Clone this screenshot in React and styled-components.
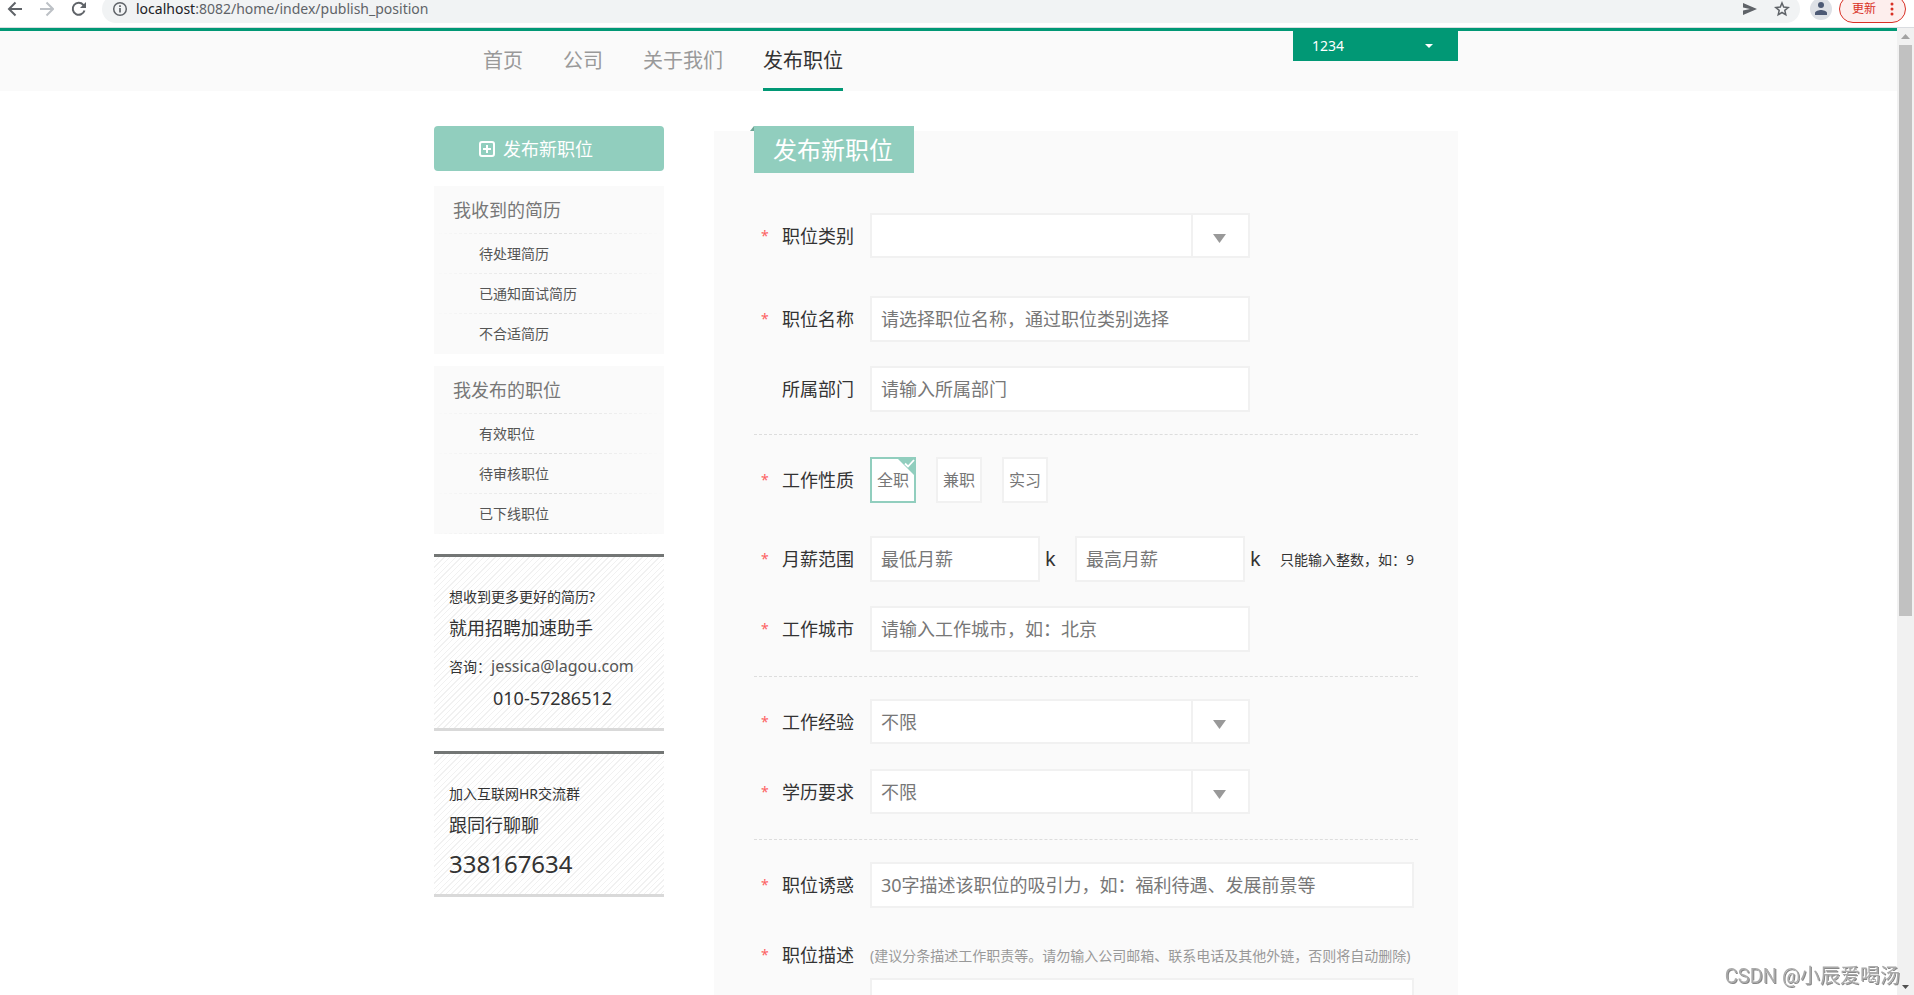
import React, { useState } from "react";
import styled, { createGlobalStyle, css } from "styled-components";

const GlobalStyle = createGlobalStyle`
  * { box-sizing: border-box; }
  body {
    margin: 0;
    background: #fff;
    color: #333;
    font: 14px/20px "Noto Sans", "Noto Sans CJK SC", sans-serif;
  }
  button, input, select, textarea { font: inherit; color: inherit; }
  a { color: inherit; text-decoration: none; }
`;

const Window = styled.div`
  display: flex;
  flex-direction: column;
  height: 100vh;
  overflow: hidden;
`;

/* Browser bar */
const BrowserBar = styled.div`
  flex: none;
  display: flex;
  align-items: center;
  height: 28px;
  padding: 0 8px 9px 6px;
  overflow: hidden;
  border-bottom: 1px solid #dadce0;
`;

const iconBox = css`
  display: grid;
  place-items: center;
  flex: none;
  width: 16px;
  height: 16px;
  svg { display: block; }
`;

const IconButton = styled.button`
  ${iconBox}
  margin-right: 16px;
  padding: 0;
  border: 0;
  background: none;
  color: ${(p) => (p.$dim ? "#bdc1c6" : "#5f6368")};
`;

const SiteInfo = styled.span`
  ${iconBox}
  color: #5f6368;
`;

const AddressBar = styled.div`
  flex: 1;
  display: flex;
  align-items: center;
  height: 28px;
  margin-right: 10px;
  padding: 0 10px;
  border-radius: 14px;
  background: #f1f3f4;
`;

const Address = styled.div`
  flex: 1;
  margin-left: 8px;
  color: #5f6368;
  b { font-weight: 400; color: #202124; }
`;

const BarIcons = styled.div`
  display: flex;
  gap: 16px;
  ${IconButton} { margin: 0; }
`;

const Avatar = styled.button`
  flex: none;
  width: 22px;
  height: 22px;
  padding: 0;
  border: 0;
  border-radius: 50%;
  background: #dee1e6;
  svg { display: block; }
`;

const UpdateButton = styled.button`
  flex: none;
  display: flex;
  align-items: center;
  justify-content: space-between;
  width: 67px;
  height: 28px;
  margin-left: 7px;
  padding: 0 11px 0 12px;
  border: 1px solid #d93025;
  border-radius: 14px;
  background: #fdeeed;
  color: #d93025;
  font-size: 12px;
`;

/* Page frame */
const Viewport = styled.div`
  flex: 1;
  display: flex;
  min-height: 0;
`;

const Page = styled.div`
  flex: 1;
  min-width: 0;
  overflow: hidden;
`;

const ScrollBar = styled.div`
  flex: none;
  display: flex;
  flex-direction: column;
  justify-content: space-between;
  width: 17px;
  background: #f1f1f1;
`;

const ScrollThumb = styled.div`
  width: 13px;
  height: 59%;
  margin: 0 2px auto;
  background: #c1c1c1;
`;

const Container = styled.div`
  display: flex;
  width: 1024px;
  max-width: 100%;
  margin: 0 auto;
`;

const TopBar = styled.header`
  padding-right: 5px;
  border-top: 3px solid #019875;
  background: #fafafa;
  ${Container} { justify-content: space-between; align-items: flex-start; }
`;

const Nav = styled.nav`
  display: flex;
  gap: 40px;
  margin-left: 49px;
`;

const NavLink = styled.a`
  height: 60px;
  font-size: 20px;
  line-height: 60px;
  color: ${(p) => (p.$active ? "#333" : "#999")};
  border-bottom: 3px solid ${(p) => (p.$active ? "#019875" : "transparent")};
`;

const UserMenu = styled.button`
  display: flex;
  align-items: center;
  justify-content: space-between;
  width: 165px;
  height: 30px;
  padding: 0 25px 0 19px;
  border: 0;
  background: #019875;
  color: #fff;
`;

const Body = styled.main`
  padding: 35px 5px 0 0;
`;

/* Sidebar */
const Sidebar = styled.aside`
  flex: none;
  width: 230px;
  margin-right: 50px;
`;

const PublishLink = styled.a`
  display: flex;
  align-items: center;
  gap: 8px;
  height: 45px;
  margin-bottom: 15px;
  padding-left: 45px;
  border-radius: 4px;
  background: #91cebe;
  color: #fff;
  font-size: 18px;
`;

const dashedBottom = css`
  background:
    linear-gradient(90deg, #fafafa, transparent 50%, #fafafa) left bottom / 100% 1px no-repeat,
    repeating-linear-gradient(90deg, #ddd 0 3px, transparent 3px 5px) left bottom / 100% 1px no-repeat;
`;

const MenuTitle = styled.h2`
  height: 48px;
  margin: 0;
  padding-left: 19px;
  font-size: 18px;
  font-weight: 400;
  line-height: 48px;
  color: #777;
  ${dashedBottom}
`;

const MenuLink = styled.a`
  display: block;
  height: 40px;
  padding-left: 45px;
  line-height: 40px;
  color: #555;
  ${dashedBottom}
`;

const Menu = styled.nav`
  margin-bottom: 12px;
  background: #fafafa;
  &:first-of-type ${MenuLink}:last-child { background: none; }
`;

const Notice = styled.section`
  margin-top: 20px;
  padding: 30px 15px ${(p) => p.$bottom}px;
  border-top: 3px solid #737675;
  border-bottom: 3px solid #d9d9d9;
  background: repeating-linear-gradient(135deg, #fff 0 3px, #f1f1f1 3px 4px);
`;

const NoticeLine = styled.p`
  margin: 0;
  padding-left: ${(p) => p.$indent || 0}px;
  font-size: ${(p) => p.$size || 14}px;
  line-height: ${(p) => p.$line || 20}px;
`;

const MailLink = styled.a`
  font-size: 16px;
  line-height: 20px;
  color: #555;
`;

/* Form */
const Panel = styled.section`
  flex: 1;
  margin-top: 5px;
  padding: 0 40px 40px;
  background: #fafafa;
`;

const Ribbon = styled.h1`
  position: relative;
  width: 160px;
  height: 47px;
  margin: -5px 0 40px;
  padding-left: 19px;
  background: #91cebe;
  color: #fff;
  font-size: 24px;
  font-weight: 400;
  line-height: 47px;
  &::before {
    content: "";
    position: absolute;
    top: 0;
    left: -4px;
    border-style: solid;
    border-width: 0 0 5px 4px;
    border-color: transparent transparent #6fa596;
  }
`;

const FieldGroup = styled.div`
  display: grid;
  gap: 24px;
  padding: ${(p) => (p.$first ? "0 0 22px" : "22px 0 24px")};
  border-top: ${(p) => (p.$first ? "0" : "1px dashed #ddd")};
`;

const Row = styled.div`
  display: flex;
  align-items: flex-start;
  height: 46px;
  margin-bottom: ${(p) => p.$after || 0}px;
`;

const Star = styled.span`
  flex: none;
  width: 28px;
  padding-left: 7px;
  font-size: 14px;
  line-height: 46px;
  color: #fd6161;
`;

const Label = styled.label`
  flex: none;
  width: 88px;
  font-size: 18px;
  line-height: 46px;
`;

const TextBox = styled.input`
  width: ${(p) => p.$width || 380}px;
  height: 46px;
  padding: 0 9px;
  border: 2px solid #f1f1f1;
  border-radius: 0;
  outline: 0;
  background: #fff;
  font-size: 18px;
  &::placeholder { color: #777; opacity: 1; }
`;

const SelectBox = styled.div`
  display: grid;
  grid-template-columns: 1fr 57px;
  align-items: center;
  width: 380px;
  height: 45px;
  border: 2px solid #f1f1f1;
  background: #fff;
  svg { grid-area: 1 / 2; justify-self: center; margin-top: 6px; pointer-events: none; }
`;

const Select = styled.select`
  grid-area: 1 / 1 / 2 / 3;
  width: 100%;
  height: 41px;
  padding: 0 67px 0 9px;
  border: 0;
  outline: 0;
  appearance: none;
  background: linear-gradient(#f1f1f1, #f1f1f1) right 55px top / 2px 100% no-repeat;
  font-size: 18px;
  color: #777;
`;

const Choices = styled.div`
  display: flex;
  gap: 20px;
`;

const Choice = styled.label`
  position: relative;
  width: 46px;
  height: 46px;
  border: 2px solid #f1f1f1;
  background: #fff;
  font-size: 16px;
  line-height: 42px;
  text-align: center;
  color: #777;
  input { position: absolute; opacity: 0; margin: 0; }
  svg { display: none; position: absolute; top: -2px; right: -2px; }
  &:has(input:checked) { border-color: #91cebe; }
  &:has(input:checked) svg { display: block; }
`;

const Unit = styled.span`
  width: ${(p) => p.$width}px;
  padding-left: 5px;
  font-size: 20px;
  line-height: 46px;
`;

const Hint = styled.span`
  line-height: 48px;
  white-space: nowrap;
  color: ${(p) => (p.$light ? "#999" : "#333")};
`;

const Description = styled.textarea`
  display: block;
  width: 544px;
  height: 200px;
  margin: -24px 0 0 116px;
  border: 2px solid #f1f1f1;
  background: #fff;
  resize: none;
`;

const Watermark = styled.div`
  position: fixed;
  right: 14px;
  bottom: 6px;
  font-family: Roboto, "Noto Sans CJK SC", sans-serif;
  font-size: 20px;
  line-height: 26px;
  color: #aaa;
  text-shadow: -1px -1px 0 #fff, 1px 1px 0 #888;
`;

const Triangle = ({ w, h, color }) => (
  <svg width={w} height={h} viewBox="0 0 10 10" preserveAspectRatio="none" aria-hidden="true">
    <path d="M0 0h10L5 10z" fill={color} />
  </svg>
);

function Field({ id, label, required = true, after, children }) {
  return (
    <Row $after={after}>
      <Star>{required ? "*" : ""}</Star>
      <Label htmlFor={id}>{label}</Label>
      {children}
    </Row>
  );
}

function Dropdown({ id, option }) {
  return (
    <SelectBox>
      <Select id={id}>
        <option>{option}</option>
      </Select>
      <Triangle w={13} h={9} color="#999" />
    </SelectBox>
  );
}

const menus = [
  { title: "我收到的简历", items: ["待处理简历", "已通知面试简历", "不合适简历"] },
  { title: "我发布的职位", items: ["有效职位", "待审核职位", "已下线职位"] },
];

function Browser() {
  return (
    <BrowserBar>
      <IconButton aria-label="后退">
        <svg width="16" height="16" viewBox="0 0 16 16" fill="none" stroke="currentColor" strokeWidth="2"><path d="M16 8H3.500M9.500 1.500L3 8l6.500 6.500" /></svg>
      </IconButton>
      <IconButton $dim aria-label="前进">
        <svg width="16" height="16" viewBox="0 0 16 16" fill="none" stroke="currentColor" strokeWidth="2"><path d="M2 8h12.500M8.500 1.500L15 8l-6.500 6.500" /></svg>
      </IconButton>
      <IconButton aria-label="刷新">
        <svg width="16" height="16" viewBox="0 0 16 16" fill="none" stroke="currentColor" strokeWidth="2"><path d="M14.500 9.500A6 6 0 1 1 13.300 3.800L14 5.500" /><path d="M16 1v6h-6z" fill="currentColor" stroke="none" /></svg>
      </IconButton>
      <AddressBar>
        <SiteInfo>
          <svg width="16" height="16" viewBox="0 0 16 16" fill="none" stroke="currentColor" strokeWidth="1.500"><circle cx="8" cy="8" r="6.300" /><path d="M8 7v4.500M8 4.300v1.700" strokeWidth="1.700" /></svg>
        </SiteInfo>
        <Address><b>localhost</b>:8082/home/index/publish_position</Address>
        <BarIcons>
          <IconButton aria-label="发送">
            <svg width="16" height="16" viewBox="0 0 16 16" fill="currentColor"><path d="M1 2l14 6L1 14V9.500L8 8 1 6.500z" /></svg>
          </IconButton>
          <IconButton aria-label="收藏">
            <svg width="16" height="16" viewBox="0 0 16 16" fill="none" stroke="currentColor" strokeWidth="1.500"><path d="M8 2l1.700 4.100 4.500.4-3.400 2.900 1 4.400L8 11.500l-3.800 2.300 1-4.400L1.800 6.500l4.500-.4z" /></svg>
          </IconButton>
        </BarIcons>
      </AddressBar>
      <Avatar aria-label="用户">
        <svg width="22" height="22" viewBox="0 0 22 22" fill="#4d5a75"><circle cx="11" cy="7" r="3" /><path d="M5 17v-2c0-2 4-3 6-3s6 1 6 3v2z" /></svg>
      </Avatar>
      <UpdateButton>
        更新
        <svg width="4" height="14" viewBox="0 0 4 14" fill="currentColor"><circle cx="2" cy="2" r="1.500" /><circle cx="2" cy="7" r="1.500" /><circle cx="2" cy="12" r="1.500" /></svg>
      </UpdateButton>
    </BrowserBar>
  );
}

export default function App() {
  const [kind, setKind] = useState("全职");
  return (
    <Window>
      <GlobalStyle />
      <Browser />
      <Viewport>
        <Page>
          <TopBar>
            <Container>
              <Nav>
                <NavLink href="#home">首页</NavLink>
                <NavLink href="#company">公司</NavLink>
                <NavLink href="#about">关于我们</NavLink>
                <NavLink href="#publish" $active>发布职位</NavLink>
              </Nav>
              <UserMenu>
                1234
                <Triangle w={8} h={4} color="#fff" />
              </UserMenu>
            </Container>
          </TopBar>
          <Body>
            <Container>
              <Sidebar>
                <PublishLink href="#publish">
                  <svg width="16" height="16" viewBox="0 0 16 16" fill="none" stroke="#fff" strokeWidth="2"><rect x="1" y="1" width="14" height="14" rx="2" /><path d="M8 4v8M4 8h8" /></svg>
                  发布新职位
                </PublishLink>
                {menus.map((menu) => (
                  <Menu key={menu.title}>
                    <MenuTitle>{menu.title}</MenuTitle>
                    {menu.items.map((item) => (
                      <MenuLink key={item} href="#list">{item}</MenuLink>
                    ))}
                  </Menu>
                ))}
                <Notice $bottom={17}>
                  <NoticeLine>想收到更多更好的简历?</NoticeLine>
                  <NoticeLine $size={18} $line={42}>就用招聘加速助手</NoticeLine>
                  <NoticeLine $line={36}>咨询：<MailLink href="mailto:jessica@lagou.com">jessica@lagou.com</MailLink></NoticeLine>
                  <NoticeLine $size={18} $line={26} $indent={44}>010-57286512</NoticeLine>
                </Notice>
                <Notice $bottom={12}>
                  <NoticeLine>加入互联网HR交流群</NoticeLine>
                  <NoticeLine $size={18} $line={42}>跟同行聊聊</NoticeLine>
                  <NoticeLine $size={24} $line={36}>338167634</NoticeLine>
                </Notice>
              </Sidebar>
              <Panel>
                <Ribbon>发布新职位</Ribbon>
                <form>
                  <FieldGroup $first>
                    <Field id="category" label="职位类别" after={13}>
                      <Dropdown id="category" option="" />
                    </Field>
                    <Field id="name" label="职位名称">
                      <TextBox id="name" placeholder="请选择职位名称，通过职位类别选择" />
                    </Field>
                    <Field id="department" label="所属部门" required={false}>
                      <TextBox id="department" placeholder="请输入所属部门" />
                    </Field>
                  </FieldGroup>
                  <FieldGroup>
                    <Field id="kind-全职" label="工作性质" after={9}>
                      <Choices>
                        {["全职", "兼职", "实习"].map((k) => (
                          <Choice key={k}>
                            <input type="radio" name="kind" id={`kind-${k}`} checked={kind === k} onChange={() => setKind(k)} />
                            {k}
                            <svg width="20" height="20" viewBox="0 0 20 20"><path d="M0 0h20v20z" fill="#91cebe" /><path d="M9 6.500l3 3 6-6.500" fill="none" stroke="#fff" strokeWidth="1.800" /></svg>
                          </Choice>
                        ))}
                      </Choices>
                    </Field>
                    <Field id="min" label="月薪范围">
                      <TextBox id="min" $width={170} placeholder="最低月薪" />
                      <Unit $width={35}>k</Unit>
                      <TextBox $width={170} placeholder="最高月薪" aria-label="最高月薪" />
                      <Unit $width={35}>k</Unit>
                      <Hint>只能输入整数，如：9</Hint>
                    </Field>
                    <Field id="city" label="工作城市">
                      <TextBox id="city" placeholder="请输入工作城市，如：北京" />
                    </Field>
                  </FieldGroup>
                  <FieldGroup>
                    <Field id="experience" label="工作经验">
                      <Dropdown id="experience" option="不限" />
                    </Field>
                    <Field id="education" label="学历要求">
                      <Dropdown id="education" option="不限" />
                    </Field>
                  </FieldGroup>
                  <FieldGroup>
                    <Field id="benefit" label="职位诱惑">
                      <TextBox id="benefit" $width={544} placeholder="30字描述该职位的吸引力，如：福利待遇、发展前景等" />
                    </Field>
                    <Field id="description" label="职位描述">
                      <Hint $light>(建议分条描述工作职责等。请勿输入公司邮箱、联系电话及其他外链，否则将自动删除)</Hint>
                    </Field>
                    <Description id="description" />
                  </FieldGroup>
                </form>
              </Panel>
            </Container>
          </Body>
        </Page>
        <ScrollBar>
          <svg width="17" height="17" viewBox="0 0 17 17"><path d="M4 11h9L8.500 6z" fill="#a3a3a3" /></svg>
          <ScrollThumb />
          <svg width="17" height="17" viewBox="0 0 17 17"><path d="M5 7h7L8.500 11z" fill="#505050" /></svg>
        </ScrollBar>
      </Viewport>
      <Watermark>CSDN @小辰爱喝汤</Watermark>
    </Window>
  );
}
